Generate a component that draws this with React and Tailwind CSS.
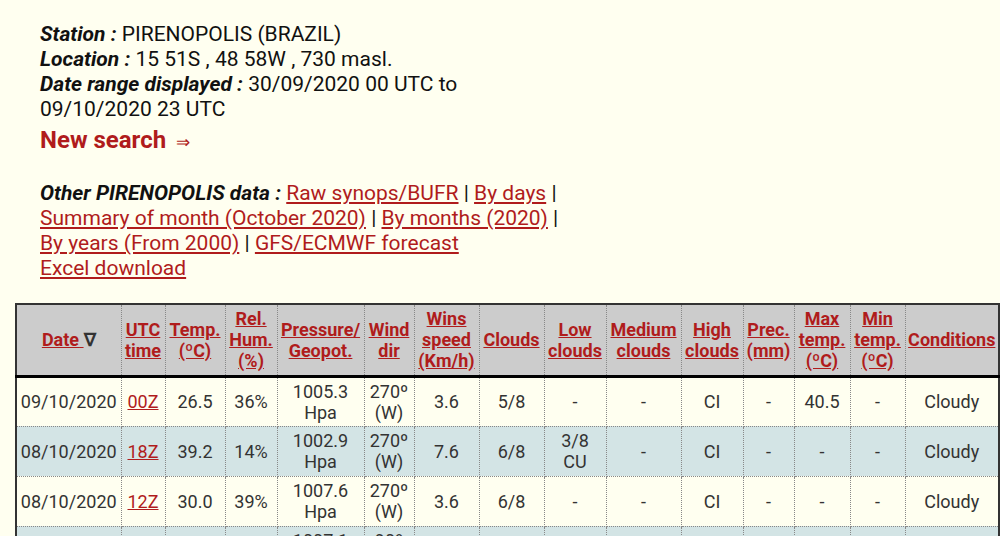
const font = { fontFamily: "Roboto, 'Liberation Sans', sans-serif" };

const COLS = [
  { w: "w-[105px]", label: ["Date"], sort: true },
  { w: "w-[44px]", label: ["UTC", "time"] },
  { w: "w-[60px]", label: ["Temp.", "(ºC)"] },
  { w: "w-[52px]", label: ["Rel.", "Hum.", "(%)"] },
  { w: "w-[87px]", label: ["Pressure/", "Geopot."] },
  { w: "w-[50px]", label: ["Wind", "dir"] },
  { w: "w-[65px]", label: ["Wins", "speed", "(Km/h)"] },
  { w: "w-[65px]", label: ["Clouds"] },
  { w: "w-[62px]", label: ["Low", "clouds"] },
  { w: "w-[75px]", label: ["Medium", "clouds"] },
  { w: "w-[62px]", label: ["High", "clouds"] },
  { w: "w-[51px]", label: ["Prec.", "(mm)"] },
  { w: "w-[56px]", label: ["Max", "temp.", "(ºC)"] },
  { w: "w-[55px]", label: ["Min", "temp.", "(ºC)"] },
  { w: "w-[94px]", label: ["Conditions"] },
];

const ROWS = [
  ["09/10/2020", "00Z", "26.5", "36%", ["1005.3", "Hpa"], ["270º", "(W)"], "3.6", "5/8", "-", "-", "CI", "-", "40.5", "-", "Cloudy"],
  ["08/10/2020", "18Z", "39.2", "14%", ["1002.9", "Hpa"], ["270º", "(W)"], "7.6", "6/8", ["3/8", "CU"], "-", "CI", "-", "-", "-", "Cloudy"],
  ["08/10/2020", "12Z", "30.0", "39%", ["1007.6", "Hpa"], ["270º", "(W)"], "3.6", "6/8", "-", "-", "CI", "-", "-", "-", "Cloudy"],
  ["08/10/2020", "06Z", "20.4", "71%", ["1007.1", "Hpa"], ["90º", "(E)"], "3.6", "2/8", "-", "-", "CI", "-", "-", "19.6", "Cloudy"],
];

function Lines({ value }) {
  if (Array.isArray(value)) {
    return value.map((v, i) => (
      <span key={i} className="block">
        {v}
      </span>
    ));
  }
  return value;
}

export default function App() {
  return (
    <div className="min-h-screen bg-[#fffff0] text-[#111]" style={font}>
      <div className="pl-[40px] pt-[22px] text-[21px] leading-[25px]">
        <p>
          <b className="italic">Station :</b> PIRENOPOLIS (BRAZIL)
        </p>
        <p>
          <b className="italic">Location :</b> 15 51S , 48 58W , 730 masl.
        </p>
        <p>
          <b className="italic">Date range displayed :</b> 30/09/2020 00 UTC to
          <br />
          09/10/2020 23 UTC
        </p>
        <p className="mt-[3px] text-[24px] leading-[30px] font-bold text-[#b01c1c]">
          New search <span className="ml-[4px] text-[17px] font-normal">⇒</span>
        </p>
        <p className="mt-[24px] whitespace-nowrap">
          <b className="italic">Other PIRENOPOLIS data :</b>{" "}
          <a className="text-[#b01c1c] underline">Raw synops/BUFR</a> |{" "}
          <a className="text-[#b01c1c] underline">By days</a> |
          <br />
          <a className="text-[#b01c1c] underline">Summary of month (October 2020)</a> |{" "}
          <a className="text-[#b01c1c] underline">By months (2020)</a> |
          <br />
          <a className="text-[#b01c1c] underline">By years (From 2000)</a> |{" "}
          <a className="text-[#b01c1c] underline">GFS/ECMWF forecast</a>
          <br />
          <a className="text-[#b01c1c] underline">Excel download</a>
        </p>
      </div>

      <table className="ml-[15px] mt-[22px] w-[984px] table-fixed border-collapse border-2 border-[#333] text-center text-[18px] leading-[21px]">
        <thead>
          <tr className="bg-[#cccccc]">
            {COLS.map((c, i) => (
              <th
                key={i}
                className={`${c.w} h-[72px] border-x border-dotted border-[#888] px-0 font-bold`}
                style={{ borderBottom: "3px solid #000" }}
              >
                {c.label.map((l, j) => (
                  <a key={j} className="block text-[#b01c1c] underline">
                    {c.sort ? (
                      <>
                        <span className="underline">{l}</span>{" "}
                        <span className="inline-block text-[#333] no-underline">∇</span>
                      </>
                    ) : (
                      l
                    )}
                  </a>
                ))}
              </th>
            ))}
          </tr>
        </thead>
        <tbody>
          {ROWS.map((r, ri) => (
            <tr key={ri} className={ri % 2 === 1 ? "bg-[#d3e4e5]" : "bg-[#fffff0]"}>
              {r.map((v, ci) => (
                <td
                  key={ci}
                  className="h-[50px] border border-dotted border-[#888] px-[2px] text-[#333]"
                >
                  {ci === 1 ? (
                    <a className="text-[#b01c1c] underline">{v}</a>
                  ) : (
                    <Lines value={v} />
                  )}
                </td>
              ))}
            </tr>
          ))}
        </tbody>
      </table>
    </div>
  );
}
